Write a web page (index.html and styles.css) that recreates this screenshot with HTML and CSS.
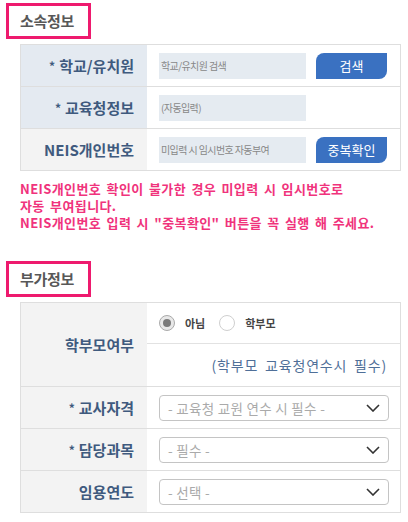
FILE: index.html
```html
<!DOCTYPE html>
<html>
<head>
<meta charset="utf-8">
<title>소속정보</title>
<link rel="stylesheet" href="styles.css">
</head>
<body>

<h3 class="group-title">소속정보</h3>
<div class="form-table">
  <div class="row">
    <div class="label label-blue"><span class="star">*</span> 학교/유치원</div>
    <div class="cell">
      <div class="field">학교/유치원 검색</div>
      <button class="btn">검색</button>
    </div>
  </div>
  <div class="row">
    <div class="label label-blue"><span class="star">*</span> 교육청정보</div>
    <div class="cell">
      <div class="field">(자동입력)</div>
    </div>
  </div>
  <div class="row">
    <div class="label label-gray">NEIS개인번호</div>
    <div class="cell">
      <div class="field">미입력 시 임시번호 자동부여</div>
      <button class="btn">중복확인</button>
    </div>
  </div>
</div>

<div class="notice">
  <p>NEIS개인번호 확인이 불가한 경우 미입력 시 임시번호로</p>
  <p>자동 부여됩니다.</p>
  <p>NEIS개인번호 입력 시 "중복확인" 버튼을 꼭 실행 해 주세요.</p>
</div>

<h3 class="group-title group-title-2">부가정보</h3>
<div class="form-table">
  <div class="row row-tall">
    <div class="label label-gray">학부모여부</div>
    <div class="cell-stack">
      <div class="radios">
        <span class="radio radio-on"></span><span class="radio-text">아님</span>
        <span class="radio"></span><span class="radio-text">학부모</span>
      </div>
      <div class="hint">(학부모 교육청연수시 필수)</div>
    </div>
  </div>
  <div class="row">
    <div class="label label-gray"><span class="star">*</span> 교사자격</div>
    <div class="cell">
      <div class="select">
        <span>- 교육청 교원 연수 시 필수 -</span>
        <svg width="14" height="8" viewBox="0 0 14 8"><path d="M1 1 L7 7 L13 1" fill="none" stroke="#333" stroke-width="1.6"/></svg>
      </div>
    </div>
  </div>
  <div class="row">
    <div class="label label-gray"><span class="star">*</span> 담당과목</div>
    <div class="cell">
      <div class="select">
        <span>- 필수 -</span>
        <svg width="14" height="8" viewBox="0 0 14 8"><path d="M1 1 L7 7 L13 1" fill="none" stroke="#333" stroke-width="1.6"/></svg>
      </div>
    </div>
  </div>
  <div class="row">
    <div class="label label-gray">임용연도</div>
    <div class="cell">
      <div class="select">
        <span>- 선택 -</span>
        <svg width="14" height="8" viewBox="0 0 14 8"><path d="M1 1 L7 7 L13 1" fill="none" stroke="#333" stroke-width="1.6"/></svg>
      </div>
    </div>
  </div>
</div>

</body>
</html>
```

FILE: styles.css
```css
body {
  margin: 0;
  padding: 3px 7px 0 6px;
  background-color: white;
  font-family: "Noto Sans CJK KR", "Noto Sans", sans-serif;
  color: #444;
}

.group-title {
  display: inline-block;
  margin: 0;
  padding: 0 14px 0 11px;
  border: 3px solid #ee1a6e;
  font-size: 15px;
  line-height: 30px;
  font-weight: bold;
  color: #585858;
  letter-spacing: -0.3px;
}

.group-title-2 {
  margin-top: 30px;
}

.form-table {
  margin: 5px 0 0 14px;
  border: 1px solid #dedede;
}

.row {
  display: grid;
  grid-template-columns: 126px 1fr;
  height: 41px;
  border-top: 1px solid #dedede;
}

.row:first-child {
  border-top: none;
}

.row-tall {
  height: 83px;
}

.label {
  display: flex;
  align-items: center;
  justify-content: flex-end;
  padding-right: 13px;
  font-size: 15px;
  font-weight: bold;
  color: #3f5a7e;
}

.label-blue {
  background-color: #e4eaf1;
}

.label-gray {
  background-color: #f3f3f3;
}

.star {
  font-size: 12px;
  margin-right: 4px;
}

.cell {
  display: flex;
  align-items: center;
  padding: 0 13px 0 12px;
}

.field {
  width: 147px;
  height: 26px;
  padding-left: 2px;
  box-sizing: border-box;
  background-color: #e5ebf1;
  font-size: 10px;
  line-height: 26px;
  color: #888;
  letter-spacing: -0.6px;
  white-space: nowrap;
}

.btn {
  margin-left: auto;
  width: 71px;
  height: 26px;
  border: none;
  border-radius: 8px 0 8px 0;
  background-color: #3a71c1;
  color: white;
  font-family: inherit;
  font-size: 13px;
  padding: 0;
}

.notice {
  margin: 9px 0 0 14px;
  font-size: 13px;
  font-weight: bold;
  color: #f0337c;
  letter-spacing: 0.4px;
  word-spacing: 2px;
}

.notice p {
  margin: 0;
  height: 17px;
  line-height: 17px;
}

.cell-stack {
  display: flex;
  flex-direction: column;
}

.radios {
  display: flex;
  align-items: center;
  height: 40px;
  padding-left: 12px;
  border-bottom: 1px solid #e2e2e2;
}

.radio {
  width: 14px;
  height: 14px;
  border: 1px solid #cfcfcf;
  border-radius: 50%;
  background-color: white;
  display: flex;
  align-items: center;
  justify-content: center;
}

.radio-on {
  border-color: #aaa;
  background-color: #e8e8e8;
}

.radio-on::after {
  content: "";
  width: 8px;
  height: 8px;
  border-radius: 50%;
  background-color: #7a7a7a;
}

.radio-text {
  margin: 0 14px 0 10px;
  font-size: 11px;
  font-weight: bold;
  color: #444;
}

.hint {
  flex: 1;
  display: flex;
  align-items: center;
  justify-content: flex-end;
  padding-right: 13px;
  font-size: 14px;
  color: #4f6f98;
  letter-spacing: 0.8px;
  word-spacing: 3px;
}

.select {
  display: flex;
  align-items: center;
  justify-content: space-between;
  width: 230px;
  height: 26px;
  box-sizing: border-box;
  padding: 0 8px 0 8px;
  border: 1px solid #c4c4c4;
  border-radius: 4px;
  font-size: 13.5px;
  color: #aaa;
  letter-spacing: 0.3px;
}
```
